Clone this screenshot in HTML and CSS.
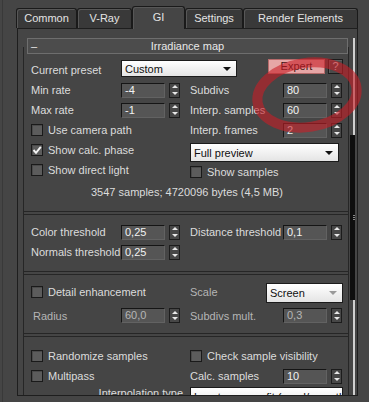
FILE: index.html
```html
<!DOCTYPE html>
<html lang="en">

<head>
  <meta charset="UTF-8">
  <meta name="viewport" content="width=device-width, initial-scale=1.0">
  <title>Render Setup | GI</title>
  <link rel="stylesheet" href="styles.css">
</head>

<body>
  <div class="window">
    <div class="tabs">
      <div class="tab">Common</div>
      <div class="tab">V-Ray</div>
      <div class="tab active">GI</div>
      <div class="tab">Settings</div>
      <div class="tab">Render Elements</div>
    </div>

    <div class="panel">
      <div class="rollouts">
        <div class="rollout">
          <div class="rollout-head">
            <span class="toggle">–</span>
            <span class="rollout-title">Irradiance map</span>
          </div>
          <div class="rollout-body">

            <!-- basic parameters -->
            <div class="group basic">
              <div class="grid">
                <span class="lbl">Current preset</span>
                <div class="preset-row">
                  <div class="select preset">Custom</div>
                  <div class="btn expert">Expert</div>
                  <div class="btn help">?</div>
                </div>

                <span class="lbl">Min rate</span>
                <div class="spin"><span class="field">-4</span><span class="arrows"></span></div>
                <span class="lbl">Subdivs</span>
                <div class="spin"><span class="field">80</span><span class="arrows"></span></div>

                <span class="lbl">Max rate</span>
                <div class="spin"><span class="field">-1</span><span class="arrows"></span></div>
                <span class="lbl">Interp. samples</span>
                <div class="spin"><span class="field">60</span><span class="arrows"></span></div>

                <label class="check"><span class="box"></span>Use camera path</label>
                <span class="lbl">Interp. frames</span>
                <div class="spin"><span class="field">2</span><span class="arrows"></span></div>

                <label class="check">
                  <span class="box"><svg width="10" height="10" viewBox="0 0 10 10"><path d="M1.5 5 L4 7.8 L8.8 1.8" stroke="#f4f4f4" stroke-width="1.9" fill="none"/></svg></span>Show calc. phase
                </label>
                <div class="select full">Full preview</div>

                <label class="check">
                  <span class="box"></span>Show direct light
                </label>
                <label class="check samples"><span class="box"></span>Show samples</label>
              </div>
              <div class="info">3547 samples; 4720096 bytes (4,5 MB)</div>
            </div>

            <!-- thresholds -->
            <div class="group thresholds">
              <div class="grid">
                <span class="lbl">Color threshold</span>
                <div class="spin"><span class="field">0,25</span><span class="arrows"></span></div>
                <span class="lbl">Distance threshold</span>
                <div class="spin"><span class="field">0,1</span><span class="arrows"></span></div>

                <span class="lbl">Normals threshold</span>
                <div class="spin"><span class="field">0,25</span><span class="arrows"></span></div>
              </div>
            </div>

            <!-- detail enhancement -->
            <div class="group detail">
              <div class="grid">
                <label class="check"><span class="box"></span>Detail enhancement</label>
                <div class="scale-row">
                  <span class="lbl off">Scale</span>
                  <div class="select screen">Screen</div>
                </div>

                <span class="lbl off radius">Radius</span>
                <div class="spin"><span class="field off">60,0</span><span class="arrows"></span></div>
                <span class="lbl off">Subdivs mult.</span>
                <div class="spin"><span class="field off">0,3</span><span class="arrows"></span></div>
              </div>
            </div>

            <!-- advanced options -->
            <div class="group advanced">
              <div class="grid">
                <label class="check"><span class="box"></span>Randomize samples</label>
                <label class="check"><span class="box"></span>Check sample visibility</label>

                <label class="check"><span class="box"></span>Multipass</label>
                <span class="lbl">Calc. samples</span>
                <div class="spin"><span class="field">10</span><span class="arrows"></span></div>

                <span class="lbl interp-lbl">Interpolation type</span>
                <div class="select interp">Least squares fit (good/smooth)</div>
              </div>
            </div>

          </div>
        </div>
      </div>

      <div class="scrollbar">
        <div class="track top"></div>
        <div class="thumb"><span class="grip"></span></div>
        <div class="track bottom"></div>
      </div>
    </div>
  </div>

  <svg class="marker" width="369" height="402" viewBox="0 0 369 402">
    <ellipse cx="307" cy="95" rx="50" ry="32" transform="rotate(-9 307 95)" />
  </svg>
</body>

</html>
```

FILE: styles.css
```css
* {
  box-sizing: border-box;
}

body {
  margin: 0;
  background: #454545;
  color: #dcdcdc;
  font-family: "Liberation Sans", Arial, sans-serif;
  font-size: 11px;
  overflow: hidden;
}

.window {
  height: 402px;
  margin-left: 2px;
  padding: 6px 0 0 13px;
  border-left: 1px solid #393939;
}

/* tabs */

.tabs {
  display: grid;
  grid-template-columns: 61px 55px 53px 58px 115px;
  align-items: end;
  height: 22px;
  position: relative;
  z-index: 1;
}

.tab {
  height: 20px;
  line-height: 19px;
  text-align: center;
  color: #e4e4e4;
  background: #393939;
  border: 1px solid #1a1a1a;
  border-bottom: 0;
  border-radius: 3px 3px 0 0;
  box-shadow: inset 1px 1px 0 #575757;
}

.tab.active {
  height: 23px;
  line-height: 21px;
  margin-bottom: -1px;
  background: #454545;
}

/* panel */

.panel {
  display: flex;
  width: 341px;
  height: 368px;
  margin-left: 1px;
  border: 1px solid #1e1e1e;
  overflow: hidden;
}

.rollouts {
  flex: 1;
  padding: 9px 0 0 5px;
}

.rollout-head {
  position: relative;
  z-index: 1;
  display: grid;
  grid-template-columns: 1fr auto 1fr;
  align-items: center;
  height: 16px;
  margin: 0 1px 0 4px;
  color: #e8e8e8;
  background: #4c4c4c;
  border: 1px solid #6e6e6e;
}

.toggle {
  padding-left: 3px;
}

.rollout-body {
  margin-top: -7px;
  border-left: 1px solid #262626;
  border-right: 1px solid #262626;
}

.group {
  padding: 0 5px 0 7px;
  border-bottom: 1px solid #262626;
}

.group + .group {
  margin-top: 2px;
  border-top: 1px solid #262626;
}

.basic {
  padding-top: 12px;
  padding-bottom: 12px;
}

.thresholds {
  padding-top: 7px;
  padding-bottom: 9px;
}

.detail {
  padding-top: 8px;
  padding-bottom: 7px;
}

.advanced {
  padding-top: 9px;
  padding-bottom: 10px;
}

.grid {
  display: grid;
  grid-template-columns: 90px 69px 93px 1fr;
  grid-auto-rows: 20px;
  align-items: center;
}

.basic .grid {
  grid-template-rows: 21px;
}

.detail .grid {
  grid-auto-rows: 21px;
  row-gap: 1px;
}

.lbl {
  white-space: nowrap;
}

.radius {
  padding-left: 2px;
}

.info {
  margin-top: 5px;
  line-height: 14px;
  text-align: center;
}

/* controls */

.spin {
  display: flex;
  align-items: center;
  gap: 4px;
}

.field {
  width: 44px;
  height: 15px;
  padding: 0 3px;
  line-height: 13px;
  color: #f2f2f2;
  background: #555555;
  border: 1px solid;
  border-color: #151515 #626262 #626262 #151515;
}

.lbl.off,
.field.off {
  color: #b5b5b5;
}

.arrows {
  display: flex;
  flex-direction: column;
  justify-content: space-around;
  align-items: center;
  width: 11px;
  height: 15px;
  background: #474747;
  border: 1px solid #1c1c1c;
}

.arrows::before,
.arrows::after {
  content: "";
  border-left: 3px solid transparent;
  border-right: 3px solid transparent;
}

.arrows::before {
  border-bottom: 3px solid #e8e8e8;
}

.arrows::after {
  border-top: 3px solid #e8e8e8;
}

.check {
  display: flex;
  align-items: center;
  gap: 5px;
  grid-column: span 2;
  white-space: nowrap;
}

.box {
  width: 12px;
  height: 12px;
  padding: 0;
  background: #5c5c5c;
  border: 1px solid #1a1a1a;
  box-shadow: inset 1px 1px 0 #4a4a4a;
}

.box svg {
  display: block;
}

.samples {
  align-self: end;
  margin-bottom: 2px;
}

.select {
  display: flex;
  align-items: center;
  justify-content: space-between;
  height: 19px;
  padding: 0 5px 0 3px;
  color: #101010;
  background: linear-gradient(#ffffff, #e4e4e4);
  border: 1px solid #1b1b1b;
  white-space: nowrap;
  overflow: hidden;
}

.select::after {
  content: "";
  flex: none;
  border-left: 4px solid transparent;
  border-right: 4px solid transparent;
  border-top: 4px solid #111111;
}

.preset-row {
  grid-column: 2 / 5;
  display: flex;
  align-items: flex-start;
  align-self: start;
}

.select.preset {
  width: 116px;
  height: 17px;
  margin-top: 1px;
}

.select.full {
  grid-column: 3 / 5;
  width: 149px;
  align-self: start;
  margin-top: 3px;
}

.scale-row {
  grid-column: 3 / 5;
  display: flex;
  justify-content: space-between;
  align-items: flex-start;
  align-self: start;
}

.scale-row .lbl {
  margin-top: 3px;
}

.detail .check {
  align-self: start;
  margin-top: 3px;
}

.select.screen {
  width: 77px;
  height: 20px;
}

.select.screen::after {
  border-top-color: #9a9a9a;
}

.interp-lbl {
  grid-column: 1 / 3;
  justify-self: end;
  align-self: start;
  margin-right: 7px;
  margin-top: 1px;
}

.select.interp {
  grid-column: 3 / 5;
  width: 153px;
  align-self: start;
  margin-top: 1px;
}

.btn {
  height: 15px;
  line-height: 13px;
  text-align: center;
  border: 1px solid #1c1c1c;
}

.expert {
  width: 57px;
  margin-left: auto;
  margin-right: 3px;
  color: #3a1010;
  background: #e6a6a6;
  border-color: #b56a6a;
}

.help {
  width: 15px;
  color: #e0e0e0;
  background: #4a4a4a;
  box-shadow: inset 1px 1px 0 #5e5e5e;
}

/* scrollbar */

.scrollbar {
  display: flex;
  flex-direction: column;
  width: 8px;
  padding: 9px 0 0 1px;
}

.track {
  width: 5px;
  border-right: 2px solid #cfcfcf;
}

.track.top {
  height: 97px;
}

.track.bottom {
  flex: 1;
}

.thumb {
  display: flex;
  align-items: center;
  justify-content: flex-end;
  width: 5px;
  height: 165px;
  background: #0e0e0e;
}

.grip {
  width: 2px;
  height: 5px;
  background: repeating-linear-gradient(#8a8a8a 0 1px, transparent 1px 2px);
}

/* red hand-drawn marker over the screenshot */

.marker {
  position: absolute;
  top: 0;
  left: 0;
  pointer-events: none;
}

.marker ellipse {
  fill: none;
  stroke: rgba(200, 30, 38, 0.6);
  stroke-width: 10;
}
```
